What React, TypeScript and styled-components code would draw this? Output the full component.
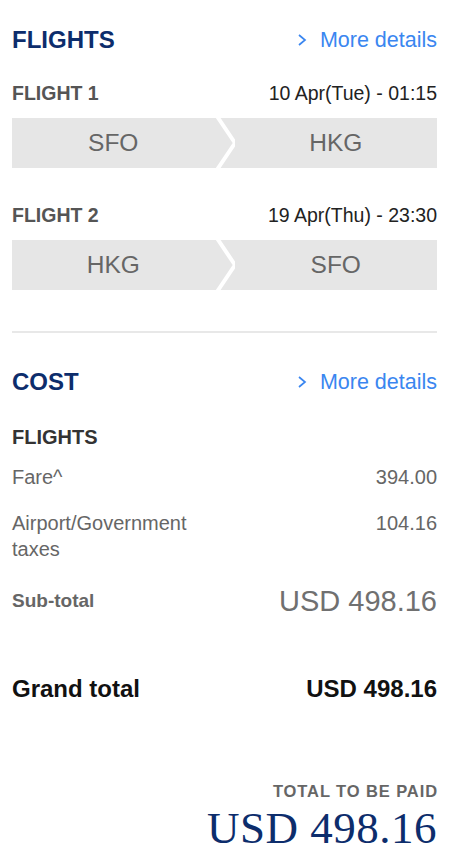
import React, { FC } from 'react';
import styled, { createGlobalStyle } from 'styled-components';

const GlobalStyle = createGlobalStyle`
    * { box-sizing: border-box; }
    body {
        margin: 0;
        background: #ffffff;
        font-family: 'Liberation Sans', Arial, sans-serif;
    }
`;

const Page = styled.div`
    width: 452px;
    padding: 26px 15px 0 12px;
    display: flex;
    flex-direction: column;
`;

const SectionHeader = styled.div`
    display: flex;
    justify-content: space-between;
    align-items: center;
    height: 28px;
`;

const Heading = styled.h2`
    margin: 0;
    font-size: 24px;
    line-height: 28px;
    font-weight: 700;
    color: #0d2d6c;
`;

const DetailsLink = styled.a`
    display: flex;
    align-items: center;
    gap: 13px;
    color: #3a86f0;
    font-size: 21.5px;
    line-height: 28px;
    text-decoration: none;
`;

const FlightBlock = styled.div<{ $top: number }>`
    margin-top: ${(p) => p.$top}px;
`;

const FlightMeta = styled.div`
    display: flex;
    justify-content: space-between;
    align-items: center;
    height: 24px;
    margin-bottom: 13px;
`;

const FlightLabel = styled.span`
    font-size: 19.5px;
    font-weight: 700;
    color: #555555;
`;

const FlightDate = styled.span`
    font-size: 19.5px;
    color: #222222;
`;

const RouteBar = styled.div`
    display: flex;
    height: 50px;
    background: #e6e6e6;
`;

const Airport = styled.div`
    flex: 1;
    display: flex;
    align-items: center;
    justify-content: center;
    font-size: 24.5px;
    color: #666666;
`;

const Divider = styled.hr`
    margin: 41px 0 0;
    border: none;
    border-top: 2px solid #e8e8e8;
`;

const CostSection = styled.div`
    margin-top: 35px;
`;

const SubHeading = styled.div`
    margin-top: 29px;
    font-size: 20px;
    line-height: 24px;
    font-weight: 700;
    color: #333333;
`;

const Row = styled.div<{ $top: number }>`
    display: flex;
    justify-content: space-between;
    align-items: flex-start;
    margin-top: ${(p) => p.$top}px;
`;

const RowLabel = styled.span`
    font-size: 20px;
    line-height: 26px;
    color: #666666;
    max-width: 200px;
`;

const RowValue = styled.span`
    font-size: 20px;
    line-height: 26px;
    color: #666666;
`;

const SubtotalRow = styled.div`
    display: flex;
    justify-content: space-between;
    align-items: center;
    margin-top: 22px;
`;

const SubtotalLabel = styled.span`
    font-size: 19px;
    font-weight: 700;
    color: #666666;
`;

const SubtotalValue = styled.span`
    font-size: 29px;
    line-height: 34px;
    color: #707070;
`;

const GrandRow = styled.div`
    display: flex;
    justify-content: space-between;
    align-items: center;
    margin-top: 56px;
    line-height: 30px;
`;

const GrandText = styled.span`
    font-size: 24px;
    font-weight: 700;
    color: #111111;
`;

const PaidBlock = styled.div`
    margin-top: 77px;
    display: flex;
    flex-direction: column;
    align-items: flex-end;
`;

const PaidLabel = styled.span`
    font-size: 16.5px;
    line-height: 20px;
    font-weight: 700;
    color: #666666;
    letter-spacing: 0.9px;
    margin-right: -1px;
`;

const PaidAmount = styled.span`
    margin-top: 3px;
    font-family: 'Liberation Serif', 'Times New Roman', serif;
    font-size: 45px;
    line-height: 48px;
    color: #0d2d6c;
    letter-spacing: 0.5px;
`;

const ChevronRight: FC = () => (
    <svg width="10" height="14" viewBox="0 0 10 14" fill="none">
        <polyline points="2,2 8,7 2,12" stroke="#3a86f0" strokeWidth="1.7" />
    </svg>
);

const RouteChevron: FC = () => (
    <svg width="20" height="50" viewBox="0 0 20 50">
        <polyline points="2.5,-1 20,25 2.5,51" fill="none" stroke="#ffffff" strokeWidth="4" />
    </svg>
);

interface IFlight {
    label: string;
    date: string;
    from: string;
    to: string;
}

const flights: IFlight[] = [
    { label: 'FLIGHT 1', date: '10 Apr(Tue) - 01:15', from: 'SFO', to: 'HKG' },
    { label: 'FLIGHT 2', date: '19 Apr(Thu) - 23:30', from: 'HKG', to: 'SFO' },
];

const MoreDetails: FC = () => (
    <DetailsLink href="#">
        <ChevronRight />
        More details
    </DetailsLink>
);

const App: FC = () => {
    return (
        <>
            <GlobalStyle />
            <Page>
                <SectionHeader>
                    <Heading>FLIGHTS</Heading>
                    <MoreDetails />
                </SectionHeader>
                {flights.map((f, i) => (
                    <FlightBlock key={f.label} $top={i === 0 ? 27 : 35}>
                        <FlightMeta>
                            <FlightLabel>{f.label}</FlightLabel>
                            <FlightDate>{f.date}</FlightDate>
                        </FlightMeta>
                        <RouteBar>
                            <Airport>{f.from}</Airport>
                            <RouteChevron />
                            <Airport>{f.to}</Airport>
                        </RouteBar>
                    </FlightBlock>
                ))}
                <Divider />
                <CostSection>
                    <SectionHeader>
                        <Heading>COST</Heading>
                        <MoreDetails />
                    </SectionHeader>
                    <SubHeading>FLIGHTS</SubHeading>
                    <Row $top={15}>
                        <RowLabel>Fare^</RowLabel>
                        <RowValue>394.00</RowValue>
                    </Row>
                    <Row $top={20}>
                        <RowLabel>Airport/Government taxes</RowLabel>
                        <RowValue>104.16</RowValue>
                    </Row>
                    <SubtotalRow>
                        <SubtotalLabel>Sub-total</SubtotalLabel>
                        <SubtotalValue>USD 498.16</SubtotalValue>
                    </SubtotalRow>
                    <GrandRow>
                        <GrandText>Grand total</GrandText>
                        <GrandText>USD 498.16</GrandText>
                    </GrandRow>
                </CostSection>
                <PaidBlock>
                    <PaidLabel>TOTAL TO BE PAID</PaidLabel>
                    <PaidAmount>USD 498.16</PaidAmount>
                </PaidBlock>
            </Page>
        </>
    );
};

export default App;
